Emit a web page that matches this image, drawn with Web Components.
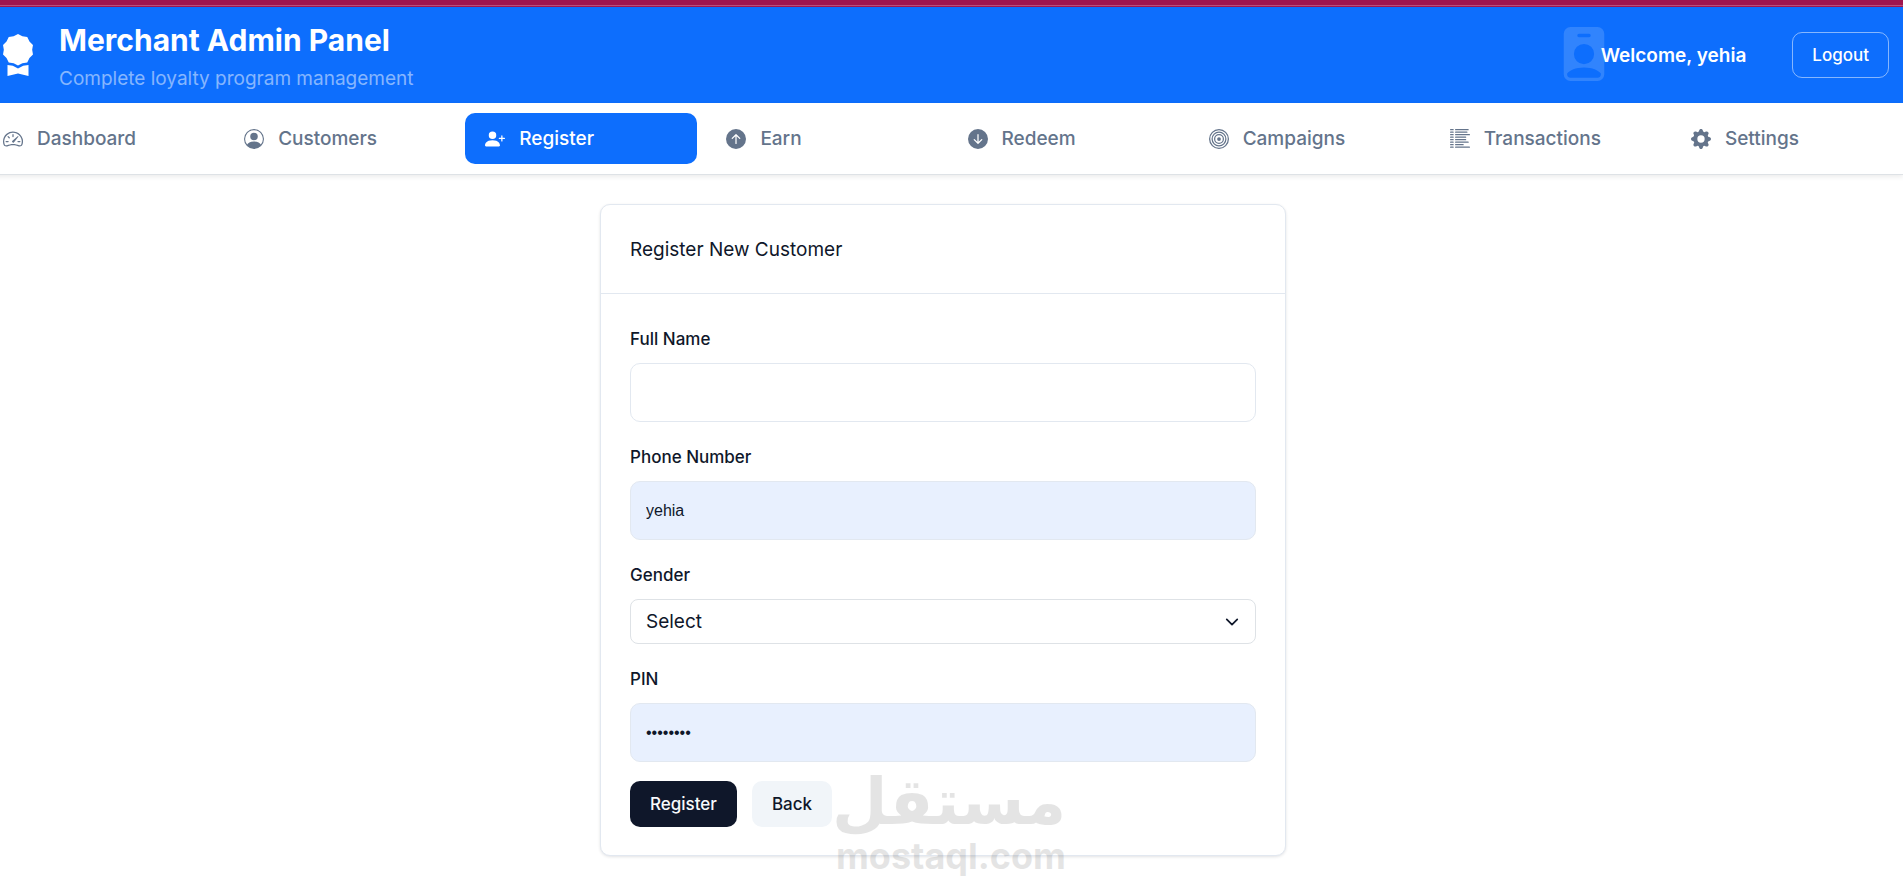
<!DOCTYPE html>
<html lang="en">
<head>
<meta charset="utf-8">
<meta name="viewport" content="width=device-width, initial-scale=1">
<title>Merchant Admin Panel</title>
<style>
    body {
        margin: 0;
        background: #fff;
        color: #0f172a;
        font-family: Inter, "Liberation Sans", sans-serif;
        overflow-x: hidden;
    }
</style>
</head>
<body>
<admin-app></admin-app>

<script>
const ICONS = {
    'award': '<path d="m8 0 1.669.864 1.858.282.842 1.68 1.337 1.32L13.4 6l.306 1.854-1.337 1.32-.842 1.68-1.858.282L8 12l-1.669-.864-1.858-.282-.842-1.68-1.337-1.32L2.6 6l-.306-1.854 1.337-1.32.842-1.68L6.331.864z"/><path d="M4 11.794V16l4-1 4 1v-4.206l-2.018.306L8 13.126 6.018 12.1z"/>',
    'badge': '<path d="M2 2a2 2 0 0 1 2-2h8a2 2 0 0 1 2 2v12a2 2 0 0 1-2 2H4a2 2 0 0 1-2-2zm4.5 0a.5.5 0 0 0 0 1h3a.5.5 0 0 0 0-1zM8 11a3 3 0 1 0 0-6 3 3 0 0 0 0 6m5 2.755C12.146 12.825 10.623 12 8 12s-4.146.826-5 1.755V14a1 1 0 0 0 1 1h8a1 1 0 0 0 1-1z"/>',
    'speedometer': '<path d="M8 4a.5.5 0 0 1 .5.5V6a.5.5 0 0 1-1 0V4.5A.5.5 0 0 1 8 4M3.732 5.732a.5.5 0 0 1 .707 0l.915.914a.5.5 0 1 1-.708.708l-.914-.915a.5.5 0 0 1 0-.707M2 10a.5.5 0 0 1 .5-.5h1.586a.5.5 0 0 1 0 1H2.5A.5.5 0 0 1 2 10m9.5 0a.5.5 0 0 1 .5-.5h1.5a.5.5 0 0 1 0 1H12a.5.5 0 0 1-.5-.5m.754-4.246a.39.39 0 0 0-.527-.02L7.547 9.31a.91.91 0 1 0 1.302 1.258l3.434-4.297a.39.39 0 0 0-.029-.518z"/><path fill-rule="evenodd" d="M0 10a8 8 0 1 1 15.547 2.661c-.442 1.253-1.845 1.602-2.932 1.25C11.309 13.488 9.475 13 8 13c-1.474 0-3.31.488-4.615.911-1.087.352-2.49.003-2.932-1.25A8 8 0 0 1 0 10m8-7a7 7 0 0 0-6.603 9.329c.203.575.923.876 1.68.63C4.397 12.533 6.358 12 8 12s3.604.532 4.923.96c.757.245 1.477-.056 1.68-.631A7 7 0 0 0 8 3"/>',
    'person': '<path d="M11 6a3 3 0 1 1-6 0 3 3 0 0 1 6 0"/><path fill-rule="evenodd" d="M0 8a8 8 0 1 1 16 0A8 8 0 0 1 0 8m8-7a7 7 0 0 0-5.468 11.37C3.242 11.226 4.805 10 8 10s4.757 1.225 5.468 2.37A7 7 0 0 0 8 1"/>',
    'person-plus': '<path d="M1 14s-1 0-1-1 1-4 6-4 6 3 6 4-1 1-1 1zm5-6a3 3 0 1 0 0-6 3 3 0 0 0 0 6"/><path d="M13.5 5a.5.5 0 0 1 .5.5V7h1.5a.5.5 0 0 1 0 1H14v1.5a.5.5 0 0 1-1 0V8h-1.5a.5.5 0 0 1 0-1H13V5.5a.5.5 0 0 1 .5-.5"/>',
    'arrow-up': '<path d="M16 8A8 8 0 1 0 0 8a8 8 0 0 0 16 0m-7.5 3.5a.5.5 0 0 1-1 0V5.707L5.354 7.854a.5.5 0 1 1-.708-.708l3-3a.5.5 0 0 1 .708 0l3 3a.5.5 0 0 1-.708.708L8.5 5.707z"/>',
    'arrow-down': '<path d="M16 8A8 8 0 1 1 0 8a8 8 0 0 1 16 0M8.5 4.5a.5.5 0 0 0-1 0v5.793L5.354 8.146a.5.5 0 1 0-.708.708l3 3a.5.5 0 0 0 .708 0l3-3a.5.5 0 0 0-.708-.708L8.5 10.293z"/>',
    'bullseye': '<g fill="none" stroke="currentColor"><circle cx="8" cy="8" r="7.5"/><circle cx="8" cy="8" r="5.5"/><circle cx="8" cy="8" r="3.5"/></g><circle cx="8" cy="8" r="1.5"/>',
    'list': '<path fill="none" stroke="currentColor" stroke-linecap="round" d="M.5.5h2M4.5.5h10M.5 2.5h2M4.5 2.5h9M.5 4.5h2M4.5 4.5h11M.5 6.5h2M4.5 6.5h8M.5 8.5h2M4.5 8.5h8M.5 10.5h2M4.5 10.5h10M.5 12.5h2M4.5 12.5h6M.5 14.5h2M4.5 14.5h11"/>',
    'gear': '<path d="M9.405 1.05c-.413-1.4-2.397-1.4-2.81 0l-.1.34a1.464 1.464 0 0 1-2.105.872l-.31-.17c-1.283-.698-2.686.705-1.987 1.987l.169.311c.446.82.023 1.841-.872 2.105l-.34.1c-1.4.413-1.4 2.397 0 2.81l.34.1a1.464 1.464 0 0 1 .872 2.105l-.17.31c-.698 1.283.705 2.686 1.987 1.987l.311-.169a1.464 1.464 0 0 1 2.105.872l.1.34c.413 1.4 2.397 1.4 2.81 0l.1-.34a1.464 1.464 0 0 1 2.105-.872l.31.17c1.283.698 2.686-.705 1.987-1.987l-.169-.311a1.464 1.464 0 0 1 .872-2.105l.34-.1c1.4-.413 1.4-2.397 0-2.81l-.34-.1a1.464 1.464 0 0 1-.872-2.105l.17-.31c.698-1.283-.705-2.686-1.987-1.987l-.311.169a1.464 1.464 0 0 1-2.105-.872zM8 10.93a2.929 2.929 0 1 1 0-5.86 2.929 2.929 0 0 1 0 5.858z"/>',
    'chevron-down': '<path fill="none" stroke="currentColor" stroke-linecap="round" stroke-linejoin="round" stroke-width="2" d="m2 5 6 6 6-6"/>'
};

customElements.define('app-icon',
    class extends HTMLElement {
        connectedCallback(){
            this.attachShadow({mode: 'open'}).innerHTML = `
    <style>
    :host{
        display: block;
        flex: none;
        width: 20px;
        height: 20px;
    }

    svg{
        display: block;
        width: 100%;
        height: 100%;
    }
    </style>
    <svg viewBox="0 0 16 16" fill="currentColor" aria-hidden="true">${ICONS[this.getAttribute('name')]}</svg>
`;
        }
    }
);

customElements.define('app-button',
    class extends HTMLElement {
        connectedCallback(){
            this.attachShadow({mode: 'open'}).innerHTML = `
    <style>
    :host{
        display: block;
    }

    button{
        box-sizing: border-box;
        display: block;
        height: 46px;
        padding: 0 19px;
        border: 1px solid transparent;
        border-radius: 10px;
        font: 500 17px/24px Inter, "Liberation Sans", sans-serif;
        cursor: pointer;
    }

    .primary{
        background: #0f172a;
        color: #f8fafc;
    }

    .secondary{
        background: #f1f5f9;
        color: #0f172a;
    }

    .outline{
        background: transparent;
        border-color: rgba(255, 255, 255, .5);
        color: #fff;
    }
    </style>
    <button type="button" class="${this.getAttribute('variant')}"><slot></slot></button>
`;
        }
    }
);

customElements.define('app-header',
    class extends HTMLElement {
        connectedCallback(){
            this.attachShadow({mode: 'open'}).innerHTML = `
    <style>
    :host{
        display: block;
        background: #0d6efd;
        color: #fff;
    }

    header{
        display: flex;
        align-items: center;
        justify-content: space-between;
        box-sizing: border-box;
        min-height: 96px;
        padding: 0 14px;
    }

    .brand, .account{
        display: flex;
        align-items: center;
    }

    .brand{
        gap: 20px;
    }

    .brand app-icon{
        width: 42px;
        height: 42px;
    }

    .titles{
        padding-top: 6px;
    }

    h1, p{
        margin: 0;
    }

    h1{
        font-size: 30px;
        font-weight: 700;
        line-height: 42px;
    }

    p{
        font-size: 19px;
        line-height: 36px;
        color: rgba(255, 255, 255, .5);
    }

    .account{
        gap: 46px;
    }

    .user{
        position: relative;
        padding-top: 2px;
        font-size: 19px;
        font-weight: 600;
        line-height: 28px;
    }

    /* large faded badge behind the start of the greeting */
    .user app-icon{
        position: absolute;
        top: -13px;
        left: -44px;
        width: 54px;
        height: 54px;
        opacity: .15;
    }
    </style>
    <header>
        <div class="brand">
            <app-icon name="award"></app-icon>
            <div class="titles">
                <h1>Merchant Admin Panel</h1>
                <p>Complete loyalty program management</p>
            </div>
        </div>
        <div class="account">
            <div class="user"><app-icon name="badge"></app-icon>Welcome, yehia</div>
            <app-button variant="outline">Logout</app-button>
        </div>
    </header>
`;
        }
    }
);

customElements.define('nav-item',
    class extends HTMLElement {
        connectedCallback(){
            this.attachShadow({mode: 'open'}).innerHTML = `
    <style>
    :host{
        display: block;
        flex: 1 1 0;
    }

    a{
        display: flex;
        align-items: center;
        gap: 14px;
        height: 51px;
        padding: 0 20px;
        border-radius: 10px;
        color: #64748b;
        font-size: 19px;
        font-weight: 500;
        line-height: 28px;
        text-decoration: none;
    }

    :host([active]) a{
        background: #0d6efd;
        color: #fff;
    }
    </style>
    <a href="#"><app-icon name="${this.getAttribute('icon')}"></app-icon><slot></slot></a>
`;
        }
    }
);

customElements.define('app-nav',
    class extends HTMLElement {
        connectedCallback(){
            this.attachShadow({mode: 'open'}).innerHTML = `
    <style>
    :host{
        display: block;
        background: #fff;
        border-bottom: 1px solid #dee2e6;
        box-shadow: 0 2px 5px rgba(0, 0, 0, .08);
    }

    nav{
        display: flex;
        gap: 9px;
        padding: 10px 0;
    }
    </style>
    <nav><slot></slot></nav>
`;
        }
    }
);

customElements.define('form-card',
    class extends HTMLElement {
        connectedCallback(){
            this.attachShadow({mode: 'open'}).innerHTML = `
    <style>
    :host{
        display: block;
        background: #fff;
        border: 1px solid #e2e8f0;
        border-radius: 10px;
        box-shadow: 0 1px 3px rgba(15, 23, 42, .12);
    }

    h2{
        margin: 0;
        padding: 31px 29px 29px;
        border-bottom: 1px solid #e2e8f0;
        font-size: 19px;
        font-weight: 400;
        line-height: 28px;
    }

    form{
        display: flex;
        flex-direction: column;
        gap: 19px;
        padding: 29px 29px 28px;
    }

    ::slotted([slot=actions]){
        display: flex;
        gap: 15px;
    }
    </style>
    <h2>${this.getAttribute('heading')}</h2>
    <form>
        <slot></slot>
        <slot name="actions"></slot>
    </form>
`;
        }
    }
);

customElements.define('form-field',
    class extends HTMLElement {
        get control(){
            const type = this.getAttribute('type');
            if(type === 'select'){
                return `<div class="select"><select id="control"><option>${this.getAttribute('value')}</option></select><app-icon name="chevron-down"></app-icon></div>`;
            }
            return `<input id="control" type="${type}" value="${this.getAttribute('value') || ''}" autocomplete="off">`;
        }

        connectedCallback(){
            this.attachShadow({mode: 'open'}).innerHTML = `
    <style>
    :host{
        display: flex;
        flex-direction: column;
        gap: 8px;
    }

    label{
        font-size: 17px;
        font-weight: 500;
        line-height: 32px;
    }

    input, select{
        box-sizing: border-box;
        width: 100%;
        margin: 0;
        padding: 0 15px;
        border: 1px solid #e2e8f0;
        border-radius: 10px;
        background: #fff;
        color: #0f172a;
        outline: none;
    }

    input{
        height: 59px;
        font: 16px "Liberation Sans", Arial, sans-serif;
    }

    :host([filled]) input{
        background: #e8f0fe;
    }

    .select{
        display: grid;
        align-items: center;
    }

    select, .select app-icon{
        grid-area: 1 / 1;
    }

    select{
        height: 45px;
        appearance: none;
        border-color: #dee2e6;
        border-radius: 8px;
        font: 19px/28px Inter, "Liberation Sans", sans-serif;
    }

    .select app-icon{
        justify-self: end;
        width: 14px;
        height: 14px;
        margin-right: 17px;
        pointer-events: none;
    }
    </style>
    <label for="control">${this.getAttribute('label')}</label>
    ${this.control}
`;
        }
    }
);

customElements.define('site-watermark',
    class extends HTMLElement {
        connectedCallback(){
            this.attachShadow({mode: 'open'}).innerHTML = `
    <style>
    :host{
        display: block;
        position: absolute;
        left: 236px;
        bottom: -22px;
        width: 230px;
        color: #000;
        opacity: .1;
        text-align: center;
        pointer-events: none;
    }

    .name{
        font: 700 64px/64px "DejaVu Sans", sans-serif;
    }

    .domain{
        font: 700 36px/44px Inter, sans-serif;
    }
    </style>
    <div class="name" lang="ar" dir="rtl">مستقل</div>
    <div class="domain">mostaql.com</div>
`;
        }
    }
);

customElements.define('admin-app',
    class extends HTMLElement {
        connectedCallback(){
            this.attachShadow({mode: 'open'}).innerHTML = `
    <style>
    :host{
        display: block;
    }

    .strip{
        height: 5px;
        margin-bottom: 1px;
        border-bottom: 1px solid #b9507c;
        background: #a0154e;
        box-shadow: 0 1px #a0154e;
    }

    /* the page is scrolled sideways by one scrollbar width */
    .page{
        margin-left: -17px;
    }

    main{
        display: flex;
        justify-content: center;
        padding: 29px 16px 40px;
    }

    .holder{
        position: relative;
        width: 686px;
        max-width: 100%;
    }
    </style>
    <div class="strip"></div>
    <div class="page">
        <app-header></app-header>
        <app-nav>
            <nav-item icon="speedometer">Dashboard</nav-item>
            <nav-item icon="person">Customers</nav-item>
            <nav-item icon="person-plus" active>Register</nav-item>
            <nav-item icon="arrow-up">Earn</nav-item>
            <nav-item icon="arrow-down">Redeem</nav-item>
            <nav-item icon="bullseye">Campaigns</nav-item>
            <nav-item icon="list">Transactions</nav-item>
            <nav-item icon="gear">Settings</nav-item>
        </app-nav>
        <main>
            <div class="holder">
                <form-card heading="Register New Customer">
                    <form-field type="text" label="Full Name"></form-field>
                    <form-field type="text" label="Phone Number" value="yehia" filled></form-field>
                    <form-field type="select" label="Gender" value="Select"></form-field>
                    <form-field type="password" label="PIN" value="12345678" filled></form-field>
                    <div slot="actions">
                        <app-button variant="primary">Register</app-button>
                        <app-button variant="secondary">Back</app-button>
                    </div>
                </form-card>
                <site-watermark></site-watermark>
            </div>
        </main>
    </div>
`;
        }
    }
);
</script>
</body>
</html>
